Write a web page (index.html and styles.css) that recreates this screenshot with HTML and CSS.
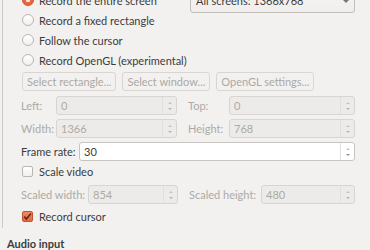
FILE: index.html
```html
<!DOCTYPE html>
<html>
<head>
  <meta charset="UTF-8">
  <title>Video input</title>
  <link rel="stylesheet" href="styles.css">
</head>
<body>
  <div class="page">
    <div class="group">
      <div class="row first-row">
        <label class="option"><span class="radio on"></span>Record the entire screen</label>
        <div class="combo">All screens: 1366x768<span class="combo-arrow"></span></div>
      </div>
      <label class="option row"><span class="radio"></span>Record a fixed rectangle</label>
      <label class="option row"><span class="radio"></span>Follow the cursor</label>
      <label class="option row"><span class="radio"></span>Record OpenGL (experimental)</label>

      <div class="buttons">
        <button class="btn" disabled>Select rectangle...</button>
        <button class="btn" disabled>Select window...</button>
        <button class="btn" disabled>OpenGL settings...</button>
      </div>

      <div class="grid rect-grid">
        <span class="lbl off">Left:</span>
        <div class="spin off"><span class="val">0</span><span class="arrows"><i class="up"></i><i class="down"></i></span></div>
        <span class="lbl off right">Top:</span>
        <div class="spin off"><span class="val">0</span><span class="arrows"><i class="up"></i><i class="down"></i></span></div>

        <span class="lbl off">Width:</span>
        <div class="spin off"><span class="val">1366</span><span class="arrows"><i class="up"></i><i class="down"></i></span></div>
        <span class="lbl off right">Height:</span>
        <div class="spin off"><span class="val">768</span><span class="arrows"><i class="up"></i><i class="down"></i></span></div>
      </div>

      <div class="grid rate-grid">
        <span class="lbl">Frame rate:</span>
        <div class="spin"><span class="val">30</span><span class="arrows"><i class="up"></i><i class="down"></i></span></div>
      </div>

      <label class="option row check-row"><span class="check"></span>Scale video</label>

      <div class="grid scale-grid">
        <span class="lbl off">Scaled width:</span>
        <div class="spin off"><span class="val">854</span><span class="arrows"><i class="up"></i><i class="down"></i></span></div>
        <span class="lbl off right">Scaled height:</span>
        <div class="spin off"><span class="val">480</span><span class="arrows"><i class="up"></i><i class="down"></i></span></div>
      </div>

      <label class="option row check-row last">
        <span class="check on">
          <svg width="11" height="11" viewBox="0 0 11 11"><path d="M2.3 5.6 L4.4 8 L8.9 2.4" fill="none" stroke="#5a2a16" stroke-width="1.6"/></svg>
        </span>Record cursor
      </label>
    </div>

    <div class="section-title">Audio input</div>
  </div>
</body>
</html>
```

FILE: styles.css
```css
body {
  margin: 0;
  background: #f2f1f0;
  font-family: "Lato", "Open Sans", sans-serif;
  font-size: 11px;
  color: #3c3c3c;
  white-space: nowrap;
}

.page {
  width: 370px;
  padding-top: 1px;
}

.group {
  margin-top: -11px;
  margin-left: 2px;
  padding: 0 15px 0 18px;
  border-left: 1px solid #cdc9c4;
  height: 238px;
}

.row {
  height: 20px;
  display: flex;
  align-items: center;
}

.first-row {
  justify-content: space-between;
}

.option {
  display: flex;
  align-items: center;
}

.radio {
  width: 10px;
  height: 10px;
  border: 1px solid #b9b5b0;
  border-radius: 50%;
  background: linear-gradient(#ffffff, #f0efed);
  margin: 0 5px 0 1px;
}

.radio.on {
  background: radial-gradient(circle, #fbe3da 0 2px, #e8683c 2.5px);
  border-color: #c9532d;
}

.combo {
  width: 158px;
  height: 24px;
  margin: -3px 0 -3px;
  border: 1px solid #c2beb9;
  border-radius: 3px;
  background: linear-gradient(#f7f6f5, #efeeec);
  display: flex;
  align-items: center;
  padding-left: 5px;
  position: relative;
  color: #3c3c3c;
}

.combo-arrow {
  position: absolute;
  right: 5px;
  top: 12px;
  border-left: 3px solid transparent;
  border-right: 3px solid transparent;
  border-top: 3px solid #7a7772;
}

.buttons {
  display: flex;
  gap: 6px;
  margin-top: 2px;
  margin-left: 1px;
}

.btn {
  height: 19px;
  padding: 0 4px;
  font-family: inherit;
  font-size: 11px;
  color: #aca9a4;
  background: #f2f1f0;
  border: 1px solid #d9d6d2;
  border-radius: 3px;
}

.grid {
  display: grid;
  align-items: center;
  row-gap: 4px;
}

.rect-grid {
  margin-top: 5px;
  grid-template-columns: 35px 121px 52px 1fr;
}

.rate-grid {
  margin-top: 4px;
  grid-template-columns: 58px 1fr;
}

.scale-grid {
  margin-top: 3px;
  grid-template-columns: 67px 90px 83px 1fr;
}

.lbl.right {
  padding-left: 11px;
}

.off {
  color: #acaaa5;
}

.spin {
  height: 19px;
  box-sizing: border-box;
  border: 1px solid #c8c4bf;
  border-radius: 3px;
  background: #ffffff;
  display: flex;
  align-items: center;
}

.spin.off {
  background: #ecebe9;
  border-color: #d8d5d1;
}

.val {
  flex: 1;
  padding-left: 4px;
}

.arrows {
  width: 13px;
  height: 100%;
  border-left: 1px solid #e2e0dd;
  display: flex;
  flex-direction: column;
  align-items: center;
  justify-content: center;
  gap: 4px;
}

.arrows i {
  width: 0;
  height: 0;
  border-left: 2px solid transparent;
  border-right: 2px solid transparent;
}

.arrows .up {
  border-bottom: 2px solid #c6c3bf;
}

.arrows .down {
  border-top: 2px solid #8c8984;
}

.spin.off .arrows .down {
  border-top-color: #b7b4b0;
}

.check-row {
  height: 21px;
}

.check-row.last {
  margin-top: 2px;
}

.check {
  width: 9px;
  height: 9px;
  border: 1px solid #b9b5b0;
  border-radius: 2px;
  background: linear-gradient(#ffffff, #f0efed);
  margin: 0 6px 0 1px;
  display: flex;
}

.check.on {
  background: linear-gradient(#ee8a62, #df6a40);
  border-color: #c3542f;
}

.check svg {
  margin: -1px;
}

.section-title {
  font-weight: bold;
  margin-left: 7px;
  margin-top: 8px;
  line-height: 16px;
}
```
